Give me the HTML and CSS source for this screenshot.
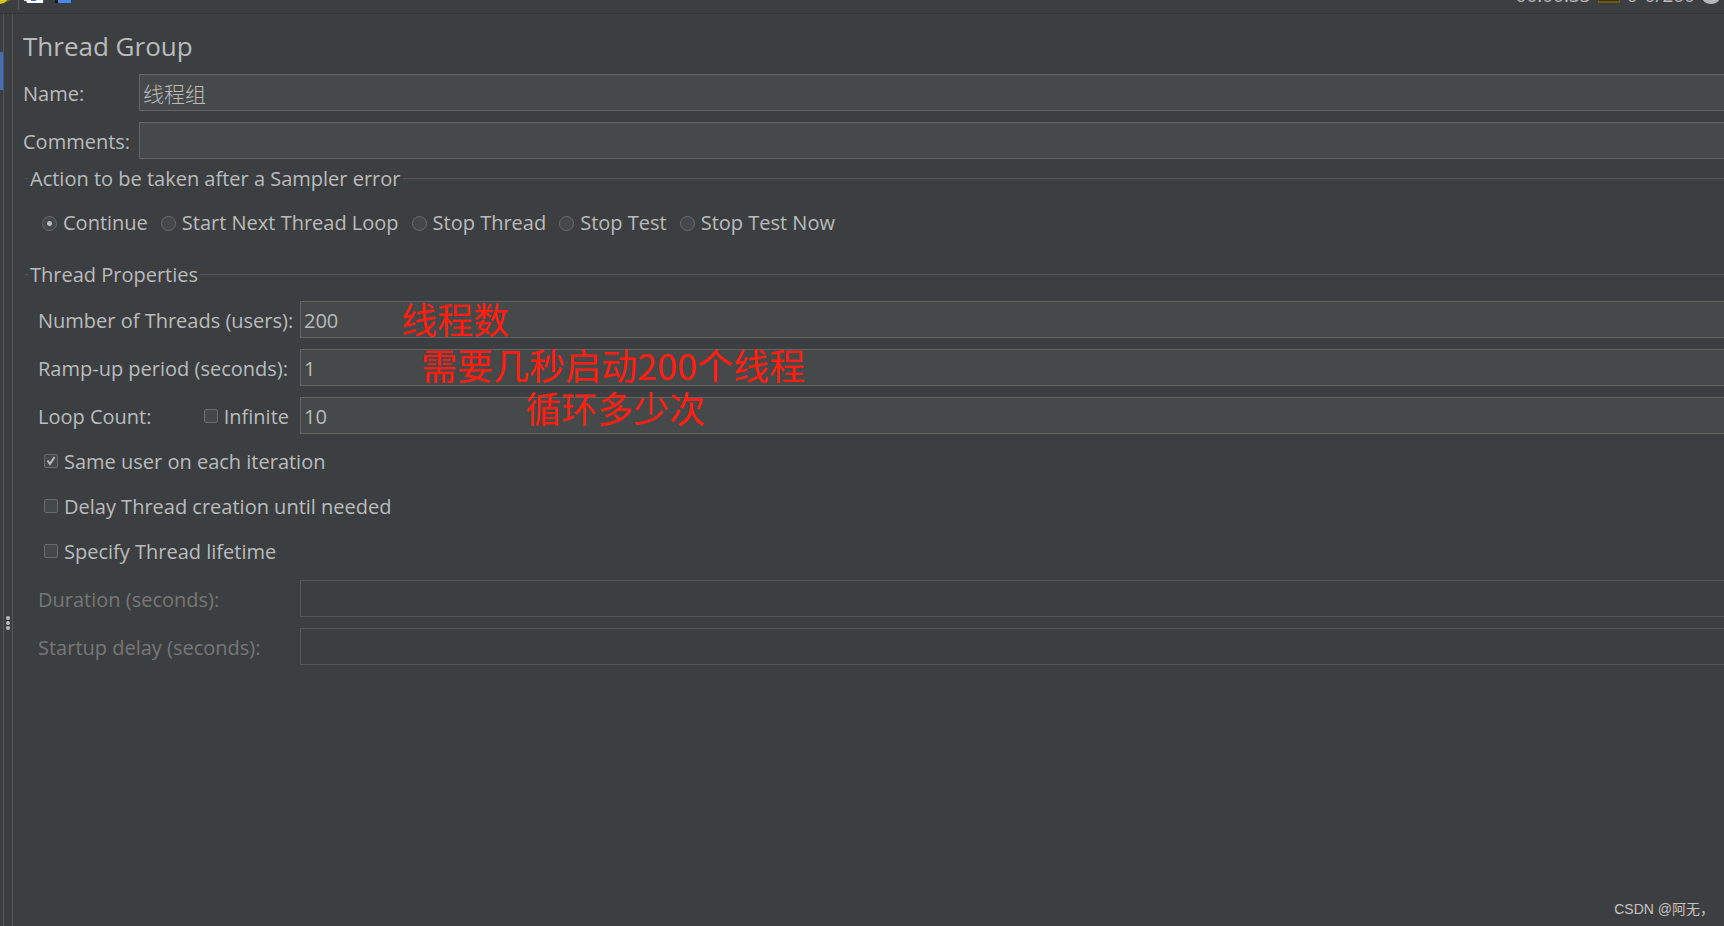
FILE: index.html
```html
<!DOCTYPE html>
<html lang="en">
<head>
  <meta charset="UTF-8">
  <meta name="viewport" content="width=device-width, initial-scale=1.0">
  <title>Thread Group</title>
  <link rel="stylesheet" href="styles.css">
</head>
<body>
  <header class="toolbar">
    <svg class="tools" width="80" height="13" viewBox="0 0 80 13">
      <path d="M0 0h8l-4 3-4 1z" fill="#d8c62e"/>
      <path d="M8 0h3L5 3z" fill="#6b6420"/>
      <path d="M18.500 0v9" stroke="#5a5d5f"/>
      <path d="M24 0h3v1h-3z" fill="#ddd"/>
      <path d="M26 0h17v3H27z" fill="#fff"/>
      <path d="M31 0h5v1h-5z" fill="#2f6fe0"/>
      <path d="M43 0h1v3h-1z" fill="#1f7a2e"/>
      <path d="M55 0h3v3h-3z" fill="#151515"/>
      <path d="M58 0h13v3H58z" fill="#4a8be0"/>
    </svg>
    <div class="status">
      <span>00:00:33</span>
      <svg width="22" height="3" viewBox="0 0 22 3">
        <path d="M0 0h22v3H0z" fill="#6b5c14"/>
        <path d="M1 0h20v1H1z" fill="#3a3210"/>
      </svg>
      <span>0</span>
      <span>0/200</span>
      <svg width="18" height="4" viewBox="0 0 18 4">
        <ellipse cx="9" cy="-3" rx="9" ry="7" fill="#b8b8b8"/>
      </svg>
    </div>
  </header>

  <div class="workspace">
    <div class="tree"><div class="tree-selected"></div></div>
    <div class="splitter">
      <span class="dot"></span>
      <span class="dot"></span>
      <span class="dot"></span>
    </div>

    <main class="panel">
      <h1>Thread Group</h1>
      <form>
        <div class="row header-row">
          <label for="name">Name:</label>
          <input type="text" id="name" class="field name-field" value="线程组">
        </div>
        <div class="row header-row">
          <label for="comments">Comments:</label>
          <input type="text" id="comments" class="field">
        </div>

        <fieldset class="error-action">
          <legend>Action to be taken after a Sampler error</legend>
          <div class="radios">
            <label><input type="radio" name="action" checked>Continue</label>
            <label><input type="radio" name="action">Start Next Thread Loop</label>
            <label><input type="radio" name="action">Stop Thread</label>
            <label><input type="radio" name="action">Stop Test</label>
            <label><input type="radio" name="action">Stop Test Now</label>
          </div>
        </fieldset>

        <fieldset>
          <legend>Thread Properties</legend>
          <div class="properties">
            <div class="row">
              <label for="threads">Number of Threads (users):</label>
              <input type="text" id="threads" class="field" value="200">
              <span class="note note-threads">线程数</span>
            </div>
            <div class="row">
              <label for="rampup">Ramp-up period (seconds):</label>
              <input type="text" id="rampup" class="field" value="1">
              <span class="note note-rampup">需要几秒启动200个线程</span>
            </div>
            <div class="row">
              <div class="loop">
                <label for="loops">Loop Count:</label>
                <label class="check"><input type="checkbox">Infinite</label>
              </div>
              <input type="text" id="loops" class="field" value="10">
              <span class="note note-loops">循环多少次</span>
            </div>
            <div class="checks">
              <label class="check"><input type="checkbox" checked>Same user on each iteration</label>
              <label class="check"><input type="checkbox">Delay Thread creation until needed</label>
              <label class="check"><input type="checkbox">Specify Thread lifetime</label>
            </div>
            <div class="row disabled">
              <label for="duration">Duration (seconds):</label>
              <input type="text" id="duration" class="field" disabled>
            </div>
            <div class="row disabled">
              <label for="delay">Startup delay (seconds):</label>
              <input type="text" id="delay" class="field" disabled>
            </div>
          </div>
        </fieldset>
      </form>
    </main>
  </div>
  <div class="watermark">CSDN @阿无，</div>
</body>
</html>
```

FILE: styles.css
```css
* { margin: 0; padding: 0; box-sizing: border-box; }
body {
  font-family: 'Open Sans', 'Noto Sans CJK SC', sans-serif;
  font-size: 20px;
  line-height: 28px;
  background: #3c3f41;
  color: #bbb;
  min-height: 100vh;
  display: flex;
  flex-direction: column;
  overflow: hidden;
}

/* toolbar, scrolled so that only its lower edge shows */
.toolbar {
  display: flex;
  justify-content: space-between;
  height: 14px;
  border-bottom: 1px solid #333537;
  overflow: hidden;
}
.status {
  display: flex;
  align-items: flex-start;
  gap: 7px;
  padding-right: 4px;
  font-size: 19px;
}
.status span { margin-top: -19px; }

.workspace { flex: 1; display: flex; }
.tree { width: 3px; padding-top: 38px; }
.tree-selected { height: 38px; background: #4b6eaf; }
.splitter {
  width: 10px;
  border-left: 1px solid #555;
  border-right: 1px solid #555;
  display: flex;
  flex-direction: column;
  align-items: center;
  justify-content: center;
  gap: 1px;
  padding-top: 306px;
}
.dot { width: 4px; height: 4px; border-radius: 50%; background: #bbb; }

.panel { flex: 1; padding: 12px 0 0 10px; }
h1 {
  font-size: 26px;
  font-weight: 400;
  line-height: 40px;
  margin-bottom: 8px;
}
.row {
  display: grid;
  grid-template-columns: 262px 1fr;
  align-items: center;
  position: relative;
  margin-bottom: 11px;
}
.row label { padding-top: 2px; }
.header-row { grid-template-columns: 116px 1fr; }
.field {
  width: 100%;
  height: 37px;
  padding: 2px 3px 0;
  font: inherit;
  color: #bbb;
  background: #45494a;
  border: 1px solid #646464;
  border-right: 0;
}
.name-field { padding-top: 0; font-weight: 300; font-size: 21px; }
.disabled { color: #777; }
.field:disabled { background: transparent; border-color: #555; }

fieldset { border: 0; border-top: 1px solid #555; margin-left: 2px; }
legend { height: 28px; margin-left: 3px; padding: 1px 2px 0; }
.error-action { margin-top: -6px; }
.radios { display: flex; gap: 13px; padding: 17px 0 23px 17px; }
.radios label { display: flex; align-items: center; gap: 6px; }
.properties { padding: 13px 0 0 13px; }

input[type="radio"],
input[type="checkbox"] {
  appearance: none;
  flex: none;
  width: 14px;
  height: 14px;
  margin-bottom: 2px;
  border: 1px solid #6b6b6b;
  border-radius: 2px;
  background: #43494a;
}
input[type="radio"] { width: 15px; height: 15px; margin-bottom: 0; border-radius: 50%; }
input[type="radio"]:checked {
  background: radial-gradient(circle, #bbb 2px, #43494a 3px);
}
input[type="checkbox"]:checked {
  background: #43494a url("data:image/svg+xml,%3Csvg xmlns='http://www.w3.org/2000/svg' viewBox='0 0 12 12'%3E%3Cpath d='M2.500 5.500l2.500 3.500L9.500 2' fill='none' stroke='%23bbb' stroke-width='2'/%3E%3C/svg%3E");
}
.check { display: flex; align-items: center; gap: 6px; }
.loop { display: flex; justify-content: space-between; padding-right: 11px; }
.checks {
  display: flex;
  flex-direction: column;
  gap: 17px;
  padding: 3px 0 3px 6px;
  margin-bottom: 11px;
}

.note {
  position: absolute;
  font-family: 'Noto Sans CJK SC', sans-serif;
  font-size: 36px;
  line-height: 36px;
  color: #ff1e10;
  white-space: nowrap;
}
.note-threads { left: 363px; top: -1px; }
.note-rampup { left: 383px; top: -3px; }
.note-loops { left: 487px; top: -8px; }

.watermark {
  position: absolute;
  right: 10px;
  bottom: 6px;
  font-family: 'Liberation Sans', 'Noto Sans CJK SC', sans-serif;
  font-size: 14px;
  line-height: 22px;
  color: #c4c4c4;
}
```
